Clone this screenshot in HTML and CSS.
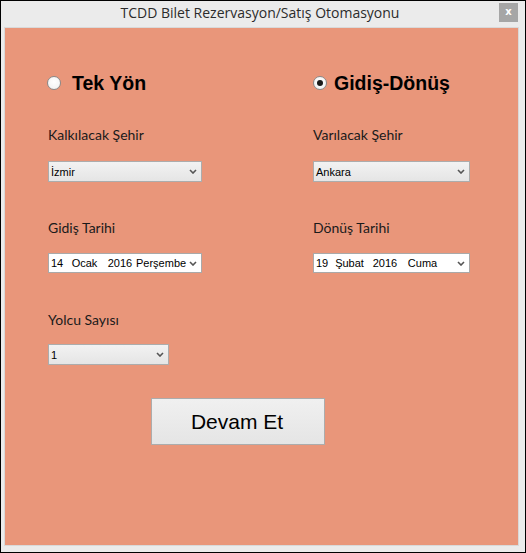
FILE: index.html
```html
<!DOCTYPE html>
<html lang="tr">
<head>
<meta charset="utf-8">
<title>TCDD Bilet Rezervasyon/Satış Otomasyonu</title>
<link rel="stylesheet" href="styles.css">
</head>
<body>
<div class="window">
  <div class="titlebar">
    <span class="title">TCDD Bilet Rezervasyon/Satış Otomasyonu</span>
    <span class="close">x</span>
  </div>
  <div class="content">
    <div class="form">
      <label class="radio radio-left"><span class="dot"></span><span class="radio-text">Tek Yön</span></label>
      <label class="radio radio-right"><span class="dot checked"></span><span class="radio-text">Gidiş-Dönüş</span></label>

      <div class="field row2">
        <div class="label">Kalkılacak Şehir</div>
        <div class="combo w-city"><span class="combo-text">İzmir</span><svg class="chev" width="8" height="5" viewBox="0 0 8 5"><path d="M1 1 L4 4 L7 1" fill="none" stroke="#555" stroke-width="1.6"/></svg></div>
      </div>
      <div class="field row2">
        <div class="label">Varılacak Şehir</div>
        <div class="combo w-city2"><span class="combo-text">Ankara</span><svg class="chev" width="8" height="5" viewBox="0 0 8 5"><path d="M1 1 L4 4 L7 1" fill="none" stroke="#555" stroke-width="1.6"/></svg></div>
      </div>

      <div class="field row3">
        <div class="label">Gidiş Tarihi</div>
        <div class="date w-city"><span class="seg d">14</span><span class="seg m">Ocak</span><span class="seg y">2016</span><span class="seg wd">Perşembe</span><svg class="chev" width="8" height="5" viewBox="0 0 8 5"><path d="M1 1 L4 4 L7 1" fill="none" stroke="#555" stroke-width="1.6"/></svg></div>
      </div>
      <div class="field row3">
        <div class="label">Dönüş Tarihi</div>
        <div class="date w-city2"><span class="seg d">19</span><span class="seg m">Şubat</span><span class="seg y">2016</span><span class="seg wd">Cuma</span><svg class="chev" width="8" height="5" viewBox="0 0 8 5"><path d="M1 1 L4 4 L7 1" fill="none" stroke="#555" stroke-width="1.6"/></svg></div>
      </div>

      <div class="field row4">
        <div class="label">Yolcu Sayısı</div>
        <div class="combo w-count"><span class="combo-text">1</span><svg class="chev" width="8" height="5" viewBox="0 0 8 5"><path d="M1 1 L4 4 L7 1" fill="none" stroke="#555" stroke-width="1.6"/></svg></div>
      </div>

      <div class="actions">
        <button class="btn">Devam Et</button>
      </div>
    </div>
  </div>
</div>
</body>
</html>
```
FILE: styles.css
```css
* { box-sizing: border-box; }
html, body { margin: 0; padding: 0; background: #ebebeb; }

.window {
  width: 526px;
  height: 553px;
  border: 1px solid #000;
  background: #ebebeb;
  display: flex;
  flex-direction: column;
}

.titlebar {
  height: 26px;
  display: grid;
  grid-template-columns: 1fr auto 1fr;
  align-items: start;
}
.title {
  grid-column: 2;
  font-family: "Open Sans", "DejaVu Sans", sans-serif;
  font-size: 14px;
  line-height: 24px;
  color: #2b2b2b;
  margin-right: 6px;
}
.close {
  grid-column: 3;
  justify-self: end;
  width: 19px;
  height: 19px;
  margin: 2px 7px 0 0;
  background: #a6a6a6;
  color: #fff;
  font-family: "DejaVu Sans", sans-serif;
  font-weight: bold;
  font-size: 10px;
  line-height: 17px;
  text-align: center;
}

.content {
  margin: 0 6px 0 3px;
  height: 519px;
  border: 1px solid #d9d9d9;
  background: #e9967a;
}

.form {
  display: grid;
  grid-template-columns: 265px 1fr;
  padding: 44px 0 0 43px;
}

.radio {
  display: flex;
  align-items: center;
  height: 22px;
  margin-bottom: 32px;
}
.radio-left { margin-left: -1px; gap: 11px; }
.radio-right { gap: 7px; }
.dot {
  width: 14px;
  height: 14px;
  border-radius: 50%;
  border: 1px solid #8a8a8a;
  background: radial-gradient(circle at 50% 40%, #ffffff 0%, #f4f4f4 70%, #e2e2e2 100%);
  display: flex;
  align-items: center;
  justify-content: center;
}
.dot.checked::after {
  content: "";
  width: 6px;
  height: 6px;
  border-radius: 50%;
  background: #1a1a1a;
}
.radio-text {
  font-family: "Liberation Sans", Arial, sans-serif;
  font-weight: bold;
  font-size: 19.5px;
  color: #000;
}

.field { display: flex; flex-direction: column; align-items: flex-start; }
.label {
  font-family: Lato, "Open Sans", sans-serif;
  font-size: 14px;
  line-height: 18px;
  color: #1a1a1a;
}
.row2 .label { margin-bottom: 17px; }
.row2 { margin-bottom: 37px; }
.row3 .label { margin-bottom: 16px; }
.row3 { margin-bottom: 38px; }
.row4 .label { margin-bottom: 15px; }
.row4 { margin-bottom: 33px; grid-column: 1; }

.combo, .date {
  display: flex;
  align-items: center;
  border: 1px solid #acacac;
  font-family: "Liberation Sans", Arial, sans-serif;
  font-size: 11px;
  color: #000;
}
.combo {
  height: 21px;
  background: linear-gradient(#f2f2f2, #e5e5e5);
  padding-left: 2px;
}
.date {
  height: 20px;
  background: #fff;
  border-color: #a9a9a9;
}
.combo-text { flex: 1; }
.w-city { width: 154px; }
.w-city2 { width: 157px; }
.w-count { width: 121px; }

.seg { display: inline-block; text-align: center; }
.seg.d { width: 16px; }
.seg.m { width: 39px; }
.seg.y { width: 32px; }
.seg.wd { width: 43px; }
.date .chev { margin-left: auto; }

.chev { margin-right: 4px; flex: none; }

.actions {
  grid-column: 1 / span 2;
  padding-left: 103px;
}
.btn {
  width: 174px;
  height: 47px;
  border: 1px solid #acacac;
  background: linear-gradient(#f0f0f0, #e5e5e5);
  font-family: "Liberation Sans", Arial, sans-serif;
  font-size: 21px;
  color: #000;
  padding: 0 2px 0 0;
}
```
